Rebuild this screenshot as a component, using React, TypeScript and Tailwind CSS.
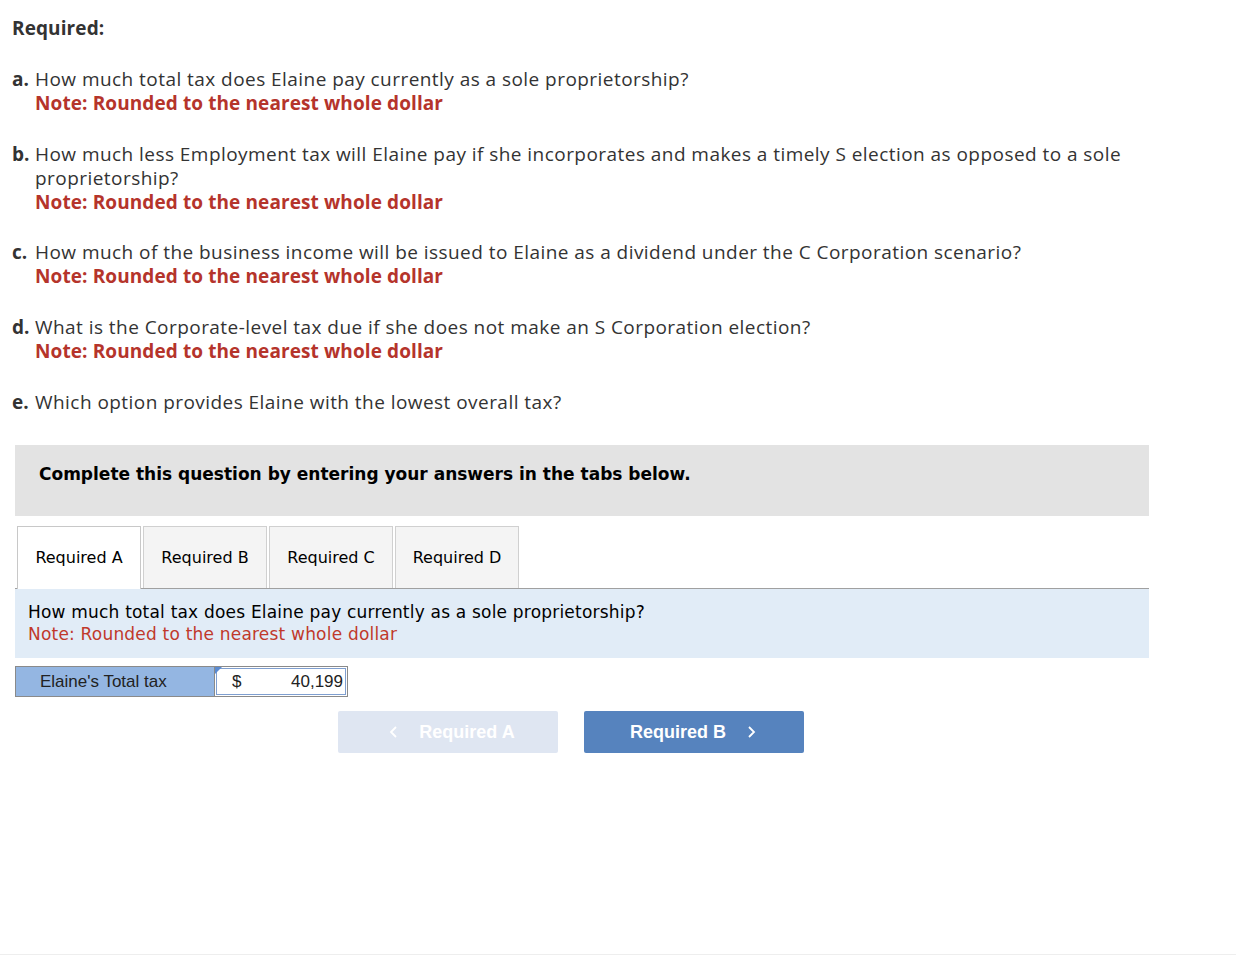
import React from "react";

const Q = ({ label, children, note = true, cls = "" }: { label: string; children: React.ReactNode; note?: boolean; cls?: string }) => (
  <div className={"flex pl-[12px] " + cls}>
    <span className="font-bold w-[23px] shrink-0">{label}</span>
    <div>
      <div className="tracking-[0.45px]">{children}</div>
      {note && <div className="font-bold text-[#b5342b]">Note: Rounded to the nearest whole dollar</div>}
    </div>
  </div>
);

export default function App() {
  return (
    <div className="w-[1236px] h-[956px] bg-white relative overflow-hidden">
      <div className="text-[#333] text-[19px] leading-[24px] tracking-[0.1px] pt-[16px] w-[1150px]" style={{ fontFamily: "'Open Sans', Lato, sans-serif" }}>
        <div className="pl-[12px] font-bold">Required:</div>
        <div className="mt-[27px] flex flex-col gap-[27px]">
          <Q label="a.">How much total tax does Elaine pay currently as a sole proprietorship?</Q>
          <Q label="b.">How much less Employment tax will Elaine pay if she incorporates and makes a timely S election as opposed to a sole proprietorship?</Q>
          <Q label="c." cls="-mt-px">How much of the business income will be issued to Elaine as a dividend under the C Corporation scenario?</Q>
          <Q label="d.">What is the Corporate-level tax due if she does not make an S Corporation election?</Q>
          <Q label="e." note={false}>Which option provides Elaine with the lowest overall tax?</Q>
        </div>
      </div>

      <div className="ml-[15px] w-[1134px] mt-[31px]" style={{ fontFamily: "'DejaVu Sans', Verdana, sans-serif" }}>
        <div className="bg-[#e3e3e3] h-[71px] pl-[24px] pt-[17px] text-[17px] font-bold text-black">
          Complete this question by entering your answers in the tabs below.
        </div>
        <div className="mt-[10px] flex items-end gap-[2px] pl-[2px] border-b border-[#a0a0a0] h-[63px]">
          {["Required A", "Required B", "Required C", "Required D"].map((t, i) => (
            <div
              key={t}
              className={
                i === 0
                  ? "w-[124px] h-[63px] -mb-px bg-white border border-b-0 border-[#c8c8c8] flex items-center justify-center text-[16px] text-black"
                  : "w-[124px] h-[62px] bg-[#f4f4f4] border border-b-0 border-[#d0d0d0] flex items-center justify-center text-[16px] text-black"
              }
            >
              {t}
            </div>
          ))}
        </div>
        <div className="bg-[#e1ecf7] h-[69px] pl-[13px] pt-[12px] text-[17px] leading-[22px] tracking-[0.2px]">
          <div className="text-black">How much total tax does Elaine pay currently as a sole proprietorship?</div>
          <div className="text-[#c0392b]">Note: Rounded to the nearest whole dollar</div>
        </div>
        <div className="mt-[8px] flex h-[31px]" style={{ fontFamily: "'Liberation Sans', Arial, sans-serif" }}>
          <div className="w-[200px] bg-[#94b6e2] border border-[#8a8a8a] text-[17px] text-[#222] flex items-center pl-[24px]">
            Elaine's Total tax
          </div>
          <div className="relative w-[133px] bg-white border border-l-0 border-[#8a8a8a] p-[1px]">
            <div className="h-full border border-[#7f9fd0] flex items-center justify-between pl-[15px] pr-[2px] text-[17px] text-[#222]">
              <span>$</span>
              <span>40,199</span>
            </div>
            <div className="absolute left-0 top-0 w-0 h-0 border-t-[7px] border-t-[#5a8ad0] border-r-[7px] border-r-transparent" />
          </div>
        </div>
        <div className="mt-[14px] flex gap-[26px] pl-[323px]" style={{ fontFamily: "'Liberation Sans', Arial, sans-serif" }}>
          <div className="w-[220px] h-[42px] rounded-[2px] bg-[#dfe6f2] text-white font-bold text-[18px] flex items-center justify-center gap-[20px] pl-[8px]">
            <svg width="10" height="14" viewBox="0 0 10 14" fill="none" stroke="white" strokeWidth="1.8"><path d="M7 2L2 7l5 5" /></svg>
            <span>Required A</span>
          </div>
          <div className="w-[220px] h-[42px] rounded-[2px] bg-[#5683be] text-white font-bold text-[18px] flex items-center justify-center gap-[20px] pr-[2px]">
            <span>Required B</span>
            <svg width="10" height="14" viewBox="0 0 10 14" fill="none" stroke="white" strokeWidth="1.8"><path d="M3 2l5 5-5 5" /></svg>
          </div>
        </div>
      </div>
      <div className="absolute left-0 right-0 bottom-[1px] h-px bg-[#eeeeee]" />
    </div>
  );
}
